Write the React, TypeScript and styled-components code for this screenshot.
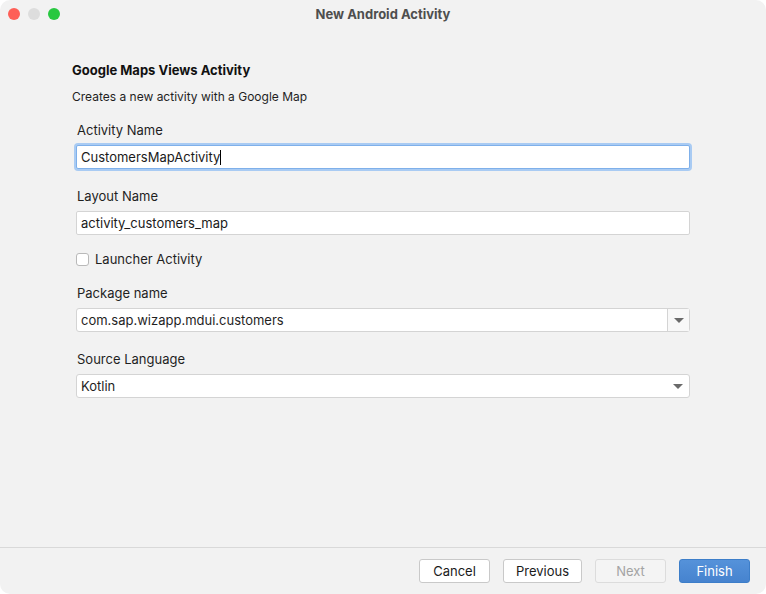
import React from 'react'
import styled, {createGlobalStyle} from 'styled-components'

const GlobalStyle = createGlobalStyle`
    html, body {
        margin: 0;
        padding: 0;
        background: #ffffff;
    }
    body {
        font-family: Inter, "Noto Sans", "Liberation Sans", sans-serif;
        -webkit-font-smoothing: antialiased;
    }
`

export default function App() {
    return (
        <>
            <GlobalStyle/>
            <Window>
                <TitleBar>
                    <Lights>
                        <Light color="#fe5f57"/>
                        <Light color="#dddddd"/>
                        <Light color="#28c840"/>
                    </Lights>
                    <Title>New Android Activity</Title>
                </TitleBar>
                <Content>
                    <Heading>Google Maps Views Activity</Heading>
                    <Description>Creates a new activity with a Google Map</Description>

                    <Field>
                        <Label>Activity Name</Label>
                        <TextBox focused>
                            CustomersMapActivity<Caret/>
                        </TextBox>
                    </Field>

                    <Field>
                        <Label>Layout Name</Label>
                        <TextBox>activity_customers_map</TextBox>
                    </Field>

                    <CheckRow>
                        <CheckBox/>
                        <span>Launcher Activity</span>
                    </CheckRow>

                    <Field>
                        <Label>Package name</Label>
                        <Combo>
                            <ComboText>com.sap.wizapp.mdui.customers</ComboText>
                            <ComboButton>
                                <Arrow/>
                            </ComboButton>
                        </Combo>
                    </Field>

                    <Field>
                        <Label>Source Language</Label>
                        <Select>
                            <span>Kotlin</span>
                            <Arrow/>
                        </Select>
                    </Field>
                </Content>
                <Footer>
                    <Button width={71}>Cancel</Button>
                    <Button width={79}>Previous</Button>
                    <Button width={71} disabled>Next</Button>
                    <Button width={71} primary>Finish</Button>
                </Footer>
            </Window>
        </>
    )
}

const Window = styled.div`
    width: 766px;
    height: 594px;
    box-sizing: border-box;
    background: #f2f2f2;
    border-radius: 10px;
    display: flex;
    flex-direction: column;
    overflow: hidden;
    color: #1f1f1f;
    font-size: 13px;
`

const TitleBar = styled.div`
    position: relative;
    height: 28px;
    flex: none;
    display: flex;
    align-items: center;
    justify-content: center;
`

const Lights = styled.div`
    position: absolute;
    left: 8px;
    top: 8px;
    display: flex;
    gap: 8px;
`

const Light = styled.div<{color: string}>`
    width: 12px;
    height: 12px;
    border-radius: 50%;
    background: ${(p) => p.color};
`

const Title = styled.div`
    font-weight: 700;
    font-size: 13px;
    color: #4e4e4e;
`

const Content = styled.div`
    flex: 1;
    padding: 34px 76px 0 72px;
    display: flex;
    flex-direction: column;
`

const Heading = styled.div`
    font-weight: 700;
    line-height: 16px;
    color: #111;
`

const Description = styled.div`
    font-size: 12px;
    line-height: 16px;
    margin-top: 11px;
    margin-bottom: 17px;
`

const Field = styled.div`
    display: flex;
    flex-direction: column;
    padding-left: 4px;
    margin-bottom: 19px;
`

const Label = styled.div`
    line-height: 16px;
    padding-left: 1px;
    margin-bottom: 7px;
`

const TextBox = styled.div<{focused?: boolean}>`
    height: 24px;
    box-sizing: border-box;
    background: #fff;
    border: 1px solid ${(p) => (p.focused ? '#7fb0ea' : '#d4d4d4')};
    box-shadow: ${(p) => (p.focused ? '0 0 0 2px #a9cbf3' : 'none')};
    border-radius: 2px;
    padding: 0 4px;
    display: flex;
    align-items: center;
    color: #1a1a1a;
`

const Caret = styled.span`
    display: inline-block;
    width: 1px;
    height: 15px;
    background: #000;
`

const CheckRow = styled.label`
    display: flex;
    align-items: center;
    gap: 6px;
    padding-left: 4px;
    line-height: 16px;
    margin-top: -3px;
    margin-bottom: 18px;
`

const CheckBox = styled.span`
    width: 13px;
    height: 13px;
    box-sizing: border-box;
    border: 1px solid #b9b9b9;
    border-radius: 3px;
    background: #fff;
`

const Combo = styled.div`
    height: 24px;
    box-sizing: border-box;
    background: #fff;
    border: 1px solid #d4d4d4;
    border-radius: 3px;
    display: flex;
`

const ComboText = styled.div`
    flex: 1;
    display: flex;
    align-items: center;
    padding: 0 4px;
`

const ComboButton = styled.div`
    width: 21px;
    border-left: 1px solid #d4d4d4;
    background: #f8f8f8;
    display: flex;
    align-items: center;
    justify-content: center;
`

const Select = styled(Combo)`
    align-items: center;
    justify-content: space-between;
    padding: 0 6px 0 4px;
`

const Arrow = styled.span`
    width: 0;
    height: 0;
    border-left: 5px solid transparent;
    border-right: 5px solid transparent;
    border-top: 5px solid #6a6a6a;
`

const Footer = styled.div`
    flex: none;
    height: 47px;
    box-sizing: border-box;
    border-top: 1px solid #d9d9d9;
    display: flex;
    align-items: flex-start;
    justify-content: flex-end;
    gap: 13px;
    padding: 11px 16px 0 0;
`

const Button = styled.button<{width: number; primary?: boolean}>`
    width: ${(p) => p.width}px;
    height: 24px;
    font-family: inherit;
    font-size: 13px;
    border-radius: 3px;
    border: 1px solid ${(p) => (p.primary ? '#3d7ec9' : '#c9c9c9')};
    background: ${(p) => (p.primary ? 'linear-gradient(#5592da, #4683cf)' : '#fff')};
    color: ${(p) => (p.primary ? '#fff' : '#1a1a1a')};
    padding: 0;

    &:disabled {
        background: #f4f4f4;
        border-color: #dcdcdc;
        color: #a3a3a3;
    }
`
